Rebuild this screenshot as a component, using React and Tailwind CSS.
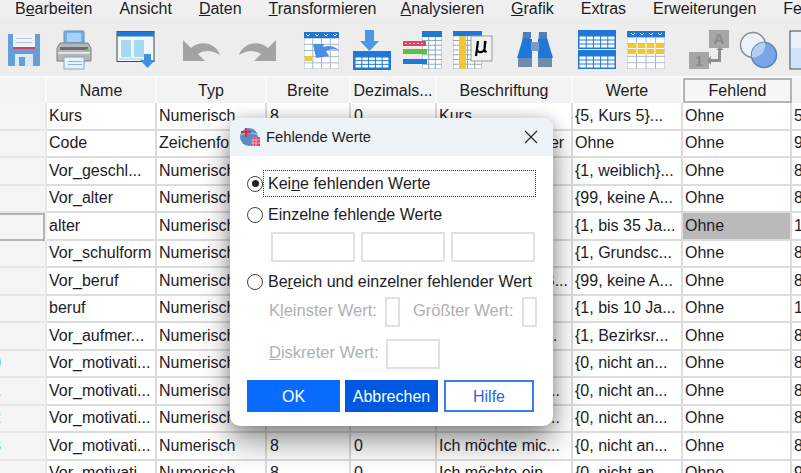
const rows = [
  ["", "Kurs", "Numerisch", "8", "0", "Kurs", "{5, Kurs 5}...", "5"],
  ["", "Code", "Zeichenfolge", "9", "0", "Code: Teilnehmer", "Ohne", "9"],
  ["", "Vor_geschl...", "Numerisch", "8", "0", "", "{1, weiblich}...", "8"],
  ["", "Vor_alter", "Numerisch", "8", "0", "", "{99, keine A...", "8"],
  ["", "alter", "Numerisch", "8", "0", "", "{1, bis 35 Ja...", "1"],
  ["", "Vor_schulform", "Numerisch", "8", "0", "", "{1, Grundsc...", "8"],
  ["", "Vor_beruf", "Numerisch", "8", "0", "Vorbefragung: B...", "{99, keine A...", "8"],
  ["", "beruf", "Numerisch", "8", "0", "", "{1, bis 10 Ja...", "1"],
  ["", "Vor_aufmer...", "Numerisch", "8", "0", "Vorbefragung: ...", "{1, Bezirksr...", "8"],
  ["0", "Vor_motivati...", "Numerisch", "8", "0", "Ich möchte mi...", "{0, nicht an...", "8"],
  ["1", "Vor_motivati...", "Numerisch", "8", "0", "Ich möchte mic...", "{0, nicht an...", "8"],
  ["2", "Vor_motivati...", "Numerisch", "8", "0", "Ich möchte mic...", "{0, nicht an...", "8"],
  ["3", "Vor_motivati...", "Numerisch", "8", "0", "Ich möchte mic...", "{0, nicht an...", "8"],
  ["4", "Vor_motivati...", "Numerisch", "8", "0", "Ich möchte ein...", "{0, nicht an...", "9"],
];
const headers = ["Name", "Typ", "Breite", "Dezimals...", "Beschriftung", "Werte", "Fehlend"];

function Cell({ children, className = "" }) {
  return (
    <div className={`border-r-2 border-b-2 border-[#dcdcdc] bg-white pl-[2px] flex items-center overflow-hidden whitespace-nowrap ${className}`}>
      {children}
    </div>
  );
}

function Save() {
  return (
    <svg width="34" height="34" viewBox="0 0 34 34" className="ml-[7px]">
      <path d="M1 1h32v31a1 1 0 0 1-1 1H2a1 1 0 0 1-1-1z" fill="#659fd9" />
      <rect x="6" y="1" width="22" height="14" fill="#eef3f8" />
      <rect x="9" y="5" width="16" height="1" fill="#b9c6d2" />
      <rect x="9" y="9" width="16" height="1" fill="#b9c6d2" />
      <rect x="6" y="14" width="22" height="2" fill="#d9434f" />
      <rect x="8" y="21" width="18" height="12" fill="#dfe9f3" />
      <rect x="12" y="24" width="6" height="9" fill="#659fd9" />
    </svg>
  );
}
function Printer() {
  return (
    <svg width="38" height="40" viewBox="0 0 38 40" className="ml-[14px]">
      <rect x="9" y="1" width="20" height="14" rx="1" fill="#6fb3ea" stroke="#5a8fc0" />
      <rect x="12" y="3" width="14" height="9" fill="#a7d3f3" />
      <path d="M5 13h28l3 5v13H2V18z" fill="#b4b6b8" stroke="#7d7f82" />
      <rect x="5" y="17" width="28" height="3" fill="#6b6d70" />
      <rect x="3" y="22" width="32" height="2" fill="#e3e4e5" />
      <rect x="31" y="19" width="3" height="2" fill="#6cc04a" />
      <path d="M9 27h20v12H9z" fill="#eaf3fa" stroke="#7fa6c8" />
      <rect x="13" y="31" width="14" height="1" fill="#8ab7dc" />
      <rect x="13" y="34" width="14" height="1" fill="#8ab7dc" />
    </svg>
  );
}
function Panel() {
  return (
    <svg width="40" height="38" viewBox="0 0 40 38" className="ml-[23px]">
      <rect x="1" y="0.5" width="37" height="30" fill="#f4f7fb" stroke="#39485c" />
      <rect x="1" y="0.5" width="37" height="5" fill="#1f78d8" />
      <rect x="5" y="9" width="10" height="17" fill="#a5d8f2" />
      <rect x="18" y="9" width="10" height="17" fill="#a5d8f2" />
      <rect x="3" y="27" width="24" height="2" fill="#c8dff0" />
      <path d="M28 23h7v6h4l-7.500 8-7.500-8h4z" fill="#3f8fe0" />
    </svg>
  );
}
function Undo({ flip = false, className = "" }) {
  return (
    <svg width="40" height="24" viewBox="0 0 40 24" className={className} style={flip ? { transform: "scaleX(-1)" } : undefined}>
      <path d="M1 2v21h22l-7-7c6-4 14-4 22 1-4-11-18-16-29-7z" fill="#a3a3a3" />
    </svg>
  );
}
function Grid({ x, y, w, h, cols, rows, fill = "#fff", line = "#1f78d8" }) {
  const out = [];
  for (let c = 0; c < cols; c++)
    for (let r = 0; r < rows; r++) {
      const cw = w / cols, rh = h / rows;
      out.push(<rect key={c + "-" + r} x={x + c * cw + 0.5} y={y + r * rh + 0.5} width={cw - 1} height={rh - 1} fill={fill} />);
    }
  return <g><rect x={x} y={y} width={w} height={h} fill={line} />{out}</g>;
}
function GotoCase() {
  return (
    <svg width="37" height="38" viewBox="0 0 37 38" className="ml-[26px]">
      <Grid x={1} y={1} w={35} h={37} cols={4} rows={6} line="#a9b7c6" />
      <rect x="1" y="1" width="35" height="6" fill="#1f78d8" />
      <path d="M3 3l2 2 2-2M12 3l2 2 2-2M21 3l2 2 2-2M30 3l2 2 2-2" stroke="#fff" fill="none" />
      <rect x="2" y="25" width="7" height="5" fill="#f1c832" />
      <path d="M10 13h11l-1 3c6-2 11-1 16 3-5-1-9-1-13 1l3 5-13 2z" fill="#4a8fe4" />
    </svg>
  );
}
function Import() {
  return (
    <svg width="38" height="40" viewBox="0 0 38 40" className="ml-[13px]">
      <path d="M12 0h9v11h5l-9.500 10L7 11h5z" fill="#4a97ea" />
      <rect x="0" y="21" width="38" height="19" fill="#1f78d8" />
      <Grid x={2} y={27} w={34} h={11} cols={5} rows={3} line="#1f78d8" />
    </svg>
  );
}
function Split() {
  return (
    <svg width="40" height="40" viewBox="0 0 40 40" className="ml-[11px]">
      <Grid x={20} y={1} w={20} h={38} cols={3} rows={8} line="#8ea7c0" />
      <rect x="20" y="1" width="20" height="6" fill="#1f78d8" />
      <rect x="1" y="11" width="23" height="5" fill="#e0436a" />
      <path d="M3 13.500h18" stroke="#f7c3d2" strokeDasharray="2 2" />
      <rect x="1" y="19" width="24" height="5" fill="#5cc23a" />
      <rect x="1" y="29" width="24" height="5" fill="#1f78d8" />
    </svg>
  );
}
function Mu() {
  return (
    <svg width="41" height="40" viewBox="0 0 41 40" className="ml-[10px]">
      <Grid x={1} y={1} w={29} h={38} cols={4} rows={8} line="#99a4ae" />
      <rect x="1" y="1" width="29" height="5" fill="#1f78d8" />
      <rect x="7" y="6" width="7" height="33" fill="#f1c832" />
      <rect x="19" y="6" width="21" height="25" fill="#f2f2f2" stroke="#9a9a9a" />
      <path d="M26 11l-2 15M25.500 20c0 3 6 3 7-1l1-8M33 11l-.5 9c0 2 1 2 2 1" stroke="#000" strokeWidth="2.200" fill="none" />
    </svg>
  );
}
function Binoculars() {
  return (
    <svg width="36" height="37" viewBox="0 0 36 37" className="ml-[24px]">
      <path d="M6 1h8v6h-1l2 9H5z" fill="#4f82ba" />
      <path d="M22 1h8v6h-1l2 9H21z" fill="#4f82ba" />
      <path d="M6 7L0 27h15V8z" fill="#1f78d8" />
      <path d="M30 7l6 20H21V8z" fill="#1f78d8" />
      <rect x="14" y="11" width="8" height="9" fill="#7f9cc0" />
      <path d="M1 27h14v9H1zM21 27h14v9H21z" fill="#6e8cb0" />
    </svg>
  );
}
function TwoTables() {
  return (
    <svg width="38" height="39" viewBox="0 0 38 39" className="ml-[25px]">
      <rect x="0" y="0" width="38" height="19" fill="#1f78d8" />
      <Grid x={1} y={6} w={36} h={12} cols={5} rows={3} line="#1f78d8" />
      <rect x="0" y="20" width="38" height="19" fill="#1f78d8" />
      <Grid x={1} y={26} w={36} h={12} cols={5} rows={3} line="#1f78d8" />
    </svg>
  );
}
function YellowTable() {
  return (
    <svg width="38" height="38" viewBox="0 0 38 38" className="ml-[11px]">
      <Grid x={0} y={0} w={38} h={38} cols={4} rows={6} line="#a9b7c6" />
      <rect x="0" y="0" width="38" height="6" fill="#1f78d8" />
      <path d="M4 2l2 2 2-2M13 2l2 2 2-2M22 2l2 2 2-2M31 2l2 2 2-2" stroke="#fff" fill="none" />
      <rect x="1" y="12" width="36" height="5" fill="#f1c832" />
      <rect x="1" y="18" width="36" height="5" fill="#f1c832" />
      <path d="M10 12v11M19 12v11M28 12v11" stroke="#fff" />
    </svg>
  );
}
function Rename() {
  return (
    <svg width="40" height="40" viewBox="0 0 40 40" className="ml-[24px]">
      <rect x="20" y="0" width="20" height="18" fill="#a6a6a6" />
      <text x="30" y="14" fontSize="15" fontWeight="700" textAnchor="middle" fill="#8a8a8a" fontFamily="Liberation Sans">A</text>
      <rect x="0" y="22" width="20" height="17" fill="#a6a6a6" />
      <text x="10" y="36" fontSize="15" fontWeight="700" textAnchor="middle" fill="#8a8a8a" fontFamily="Liberation Sans">1</text>
      <path d="M35 20l-4-3-4 3h2v9h-7v-3l-4 4.500 4 4.500v-3h10V20z" fill="#8e8e8e" />
    </svg>
  );
}
function Venn() {
  return (
    <svg width="40" height="38" viewBox="0 0 40 38" className="ml-[10px]">
      <circle cx="14" cy="14" r="12.500" fill="#eef3fa" stroke="#8c8c8c" strokeWidth="1.500" />
      <circle cx="25" cy="24" r="12.500" fill="#7aa6e8" stroke="#5e7fb0" strokeWidth="1.500" />
      <path d="M26 11.600A12.500 12.500 0 0 1 13 26.400 12.500 12.500 0 0 1 26 11.600z" fill="#b5cff0" />
    </svg>
  );
}
function Sheet() {
  return (
    <svg width="16" height="40" viewBox="0 0 16 40" className="ml-[10px]">
      <rect x="1" y="1" width="15" height="38" fill="#eaf1fb" stroke="#39485c" />
      <rect x="2" y="18" width="14" height="20" fill="#cfe3fa" />
    </svg>
  );
}
function TitleIcon() {
  return (
    <svg width="20" height="20" viewBox="0 0 20 20">
      <circle cx="9" cy="10" r="9" fill="#4f8fc4" />
      <path d="M1 8c5-3 11-3 17 0" stroke="#bcd8ee" fill="none" />
      <rect x="11" y="10" width="9" height="9" fill="#e0436a" />
      <path d="M13 10v9M16 10v9M11 13h9M11 16h9" stroke="#f8d0da" strokeWidth="0.700" />
      <path d="M6 1v9M1 5h10" stroke="#e0284f" strokeWidth="2.200" />
    </svg>
  );
}
function Radio({ checked }) {
  return (
    <span className="w-[16px] h-[16px] rounded-full border-[1.5px] border-[#444] bg-white flex items-center justify-center shrink-0">
      {checked && <span className="w-[7px] h-[7px] rounded-full bg-[#222]" />}
    </span>
  );
}
function Box({ className = "" }) {
  return <div className={`h-[30px] border-2 border-[#e1e1e1] bg-white shrink-0 ${className}`} />;
}

export default function App() {
  return (
    <div className="relative w-[801px] h-[473px] overflow-hidden bg-[#f0f0f0] text-[16px] leading-none text-[#1c1c28] font-['Liberation_Sans',Arial,sans-serif]">
      <div className="h-[17px] flex items-center pl-[15px] gap-[27px] whitespace-nowrap">
        <span>B<u>e</u>arbeiten</span>
        <span>Ansicht</span>
        <span><u>D</u>aten</span>
        <span className="-mr-[3px]"><u>T</u>ransformieren</span>
        <span><u>A</u>nalysieren</span>
        <span><u>G</u>rafik</span>
        <span>Extras</span>
        <span>Erweiterungen</span>
        <span>Fenster</span>
      </div>
      <div className="h-[59px] pt-[6px] flex items-center bg-[#ededed] overflow-hidden [&>svg]:shrink-0">
        <Save /><Printer /><Panel /><Undo className="ml-[26px]" /><Undo flip className="ml-[15px]" />
        <GotoCase /><Import /><Split /><Mu /><Binoculars /><TwoTables /><YellowTable /><Rename /><Venn /><Sheet />
      </div>
      <div className="grid grid-cols-[47px_110px_110px_84px_86px_136px_110px_109px_20px] grid-rows-[25px] auto-rows-[27.5px] border-t-2 border-[#fafafa]">
        <div className="bg-[#f3f3f3] border-r-2 border-[#fbfbfb]" />
        {headers.map((h) => (
          <div
            key={h}
            className={`flex items-center justify-center bg-[#f3f3f3] ${h === "Fehlend" ? "border-2 border-[#b4b4b4] bg-[#f6f6f6]" : "border-r-2 border-[#fbfbfb]"}`}
          >
            {h}
          </div>
        ))}
        <div className="bg-[#f3f3f3]" />
        {rows.map((r, i) => (
          <div key={i} className="contents">
            <div className={`border-b-2 border-r-2 border-[#e6e6e6] bg-[#f5f5f5] overflow-hidden flex items-center text-[#2f6fc0] ${i === 4 ? "border-t-2 !border-[#b4b4b4] mr-[2px]" : ""}`}>
              <span className="-ml-[8px]">{r[0]}</span>
            </div>
            <Cell>{r[1]}</Cell>
            <Cell>{r[2]}</Cell>
            <Cell className="pl-[3px]">{r[3]}</Cell>
            <Cell className="pl-[3px]">{r[4]}</Cell>
            <Cell>{r[5]}</Cell>
            <Cell>{r[6]}</Cell>
            <Cell className={i === 4 ? "!bg-[#bababa]" : ""}>Ohne</Cell>
            <Cell className="!border-r-0">{r[7]}</Cell>
          </div>
        ))}
      </div>

      <div className="absolute left-[230px] top-[118px] w-[323px] h-[308px] bg-white rounded-[10px] overflow-hidden shadow-[0_16px_30px_rgba(0,0,0,0.42),0_0_14px_rgba(0,0,0,0.18)]">
        <div className="h-[38px] bg-[#eef3f8] flex items-center pl-[10px] pr-[15px] text-[14.8px]">
          <TitleIcon />
          <span className="ml-[6px]">Fehlende Werte</span>
          <svg width="14" height="14" viewBox="0 0 14 14" className="ml-auto">
            <path d="M1 1l12 12M13 1L1 13" stroke="#222" strokeWidth="1.100" />
          </svg>
        </div>
        <div className="pl-[17px] pr-[17px] pt-[14px] flex flex-col">
          <div className="flex items-center h-[27px]">
            <Radio checked />
            <span className="pl-[4px] flex-1 h-[27px] flex items-center border border-dotted border-[#333] whitespace-pre">Kei<u>n</u>e fehlenden Werte</span>
          </div>
          <div className="flex items-center h-[15px] mt-[10px] gap-[5px]">
            <Radio />
            <span>Einzelne fehlen<u>d</u>e Werte</span>
          </div>
          <div className="flex ml-[24px] gap-[6px] mt-[10px]">
            <Box className="w-[84px]" />
            <Box className="w-[84px]" />
            <Box className="w-[84px]" />
          </div>
          <div className="flex items-center h-[15px] mt-[12px] gap-[5px]">
            <Radio />
            <span className="whitespace-nowrap">Be<u>r</u>eich und einzelner fehlender Wert</span>
          </div>
          <div className="flex items-center ml-[22px] mt-[8px] text-[16.5px] text-[#b0b0b0] whitespace-nowrap">
            <span className="mb-[4px]">K<u>l</u>einster Wert:</span>
            <Box className="w-[15px] ml-[8px]" />
            <span className="ml-[13px] mb-[4px]">Größter Wert:</span>
            <Box className="w-[15px] ml-[9px]" />
          </div>
          <div className="flex items-center ml-[22px] mt-[12px] text-[16.5px] text-[#b0b0b0] whitespace-nowrap">
            <span className="mb-[4px]"><u>D</u>iskreter Wert:</span>
            <Box className="w-[54px] ml-[7px]" />
          </div>
          <div className="flex mt-[11px] h-[32px] items-stretch">
            <div className="w-[93px] pt-[1px] bg-[#0a6cff] text-white flex items-center justify-center">OK</div>
            <div className="w-[93px] pt-[1px] ml-[5px] bg-[#0058e0] text-white flex items-center justify-center">Abbrechen</div>
            <div className="w-[90px] pt-[1px] ml-[6px] bg-white border-2 border-[#3b7df0] text-[#2a66e8] flex items-center justify-center">Hilfe</div>
          </div>
        </div>
      </div>
    </div>
  );
}
